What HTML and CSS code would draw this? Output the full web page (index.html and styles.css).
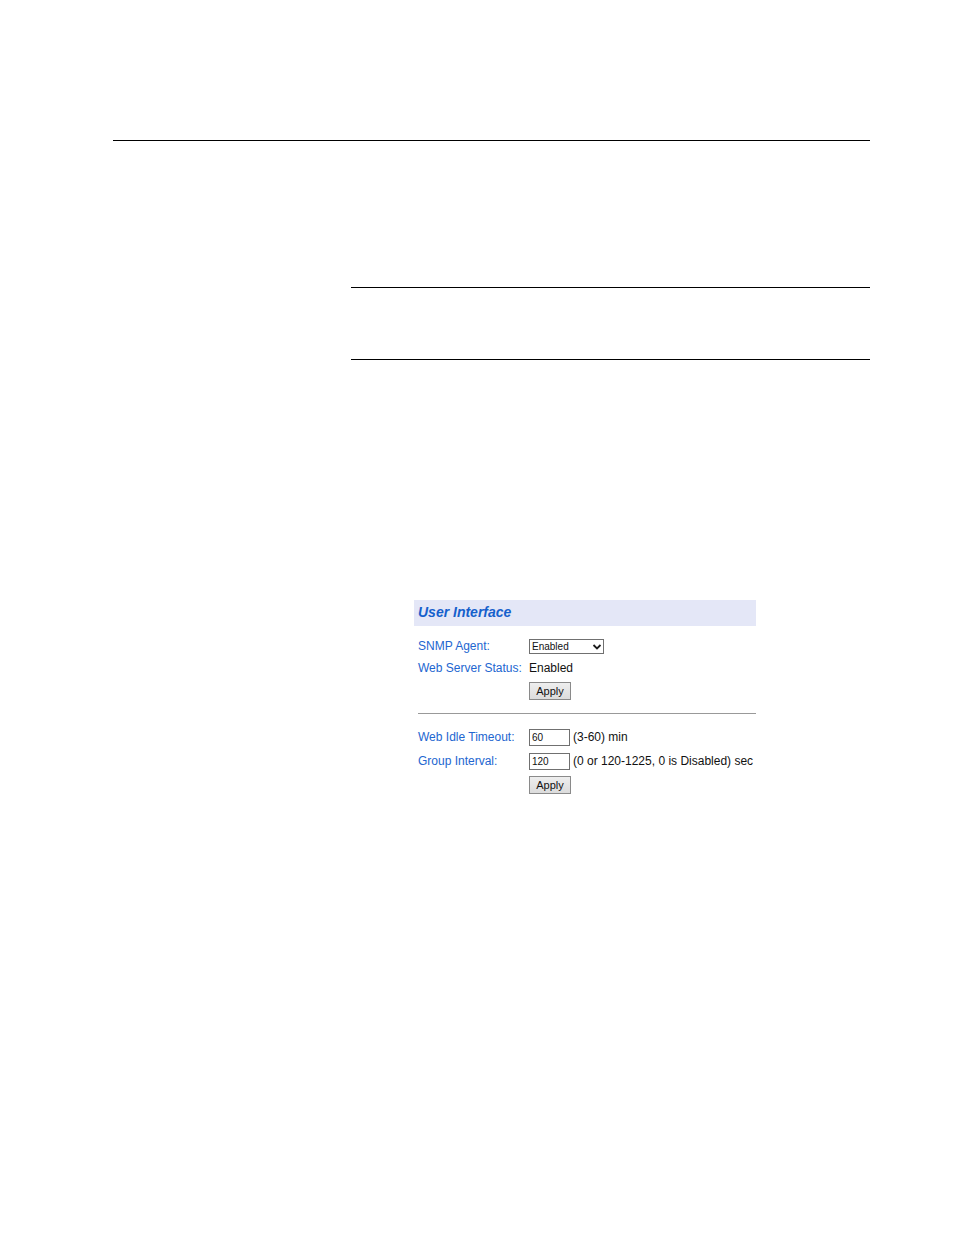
FILE: index.html
```
<!DOCTYPE html>
<html lang="en">
<head>
    <meta charset="UTF-8">
    <meta name="viewport" content="width=device-width, initial-scale=1.0">
    <title>User Interface</title>
    <link rel="stylesheet" href="styles.css">
</head>
<body>
    <div id="page">
        <hr class="rule">
        <div id="content">
            <div id="note"></div>
            <div id="panel">
                <h1>User Interface</h1>
                <form class="settings">
                    <label for="snmp">SNMP Agent:</label>
                    <div class="select-box">
                        <select id="snmp">
                            <option>Enabled</option>
                            <option>Disabled</option>
                        </select>
                        <svg class="arrow" width="10" height="6" viewBox="0 0 10 6">
                            <path d="M1.5 1 L5 4.5 L8.5 1" fill="none" stroke="#1c1c1c" stroke-width="1.8"/>
                        </svg>
                    </div>
                    <span class="name">Web Server Status:</span>
                    <span>Enabled</span>
                    <button type="button">Apply</button>
                </form>
                <hr class="divider">
                <form class="settings">
                    <label for="timeout">Web Idle Timeout:</label>
                    <div class="field">
                        <input type="text" id="timeout" value="60">
                        <span>(3-60) min</span>
                    </div>
                    <label for="interval">Group Interval:</label>
                    <div class="field">
                        <input type="text" id="interval" value="120">
                        <span>(0 or 120-1225, 0 is Disabled) sec</span>
                    </div>
                    <button type="button">Apply</button>
                </form>
            </div>
        </div>
    </div>
</body>
</html>
```

FILE: styles.css
```
body {
    margin: 0;
    background-color: white;
    color: #111;
    font-family: "Liberation Sans", Arial, sans-serif;
    font-size: 12px;
    line-height: 16px;
}
#page {
    padding: 140px 84px 80px 113px;
}
.rule {
    margin: 0;
    border: none;
    border-top: 1px solid black;
}
#content {
    margin-top: 146px;
    margin-left: 238px;
}
/* empty note area between two rules */
#note {
    height: 71px;
    border-top: 1px solid black;
    border-bottom: 1px solid black;
}
#panel {
    margin: 240px 114px 0 63px;
}
h1 {
    margin: 0;
    padding: 0 4px 2px;
    background-color: #e4e7f7;
    color: #1560cc;
    font-size: 14px;
    font-style: italic;
    line-height: 24px;
}
.settings {
    display: grid;
    grid-template-columns: 105px 1fr;
    gap: 6px;
    align-items: center;
    justify-items: start;
    margin: 12px 0 13px 4px;
    white-space: nowrap;
}
label, .name {
    color: #2266d0;
}
.select-box {
    display: flex;
    position: relative;
}
select, input {
    box-sizing: border-box;
    margin: 0;
    border: 1px solid #707070;
    border-radius: 0;
    background-color: white;
    color: #111;
    font-family: inherit;
    font-size: 10px;
}
select {
    appearance: none;
    width: 75px;
    height: 15px;
    padding: 0 2px;
}
.arrow {
    position: absolute;
    right: 2px;
    top: 5px;
    pointer-events: none;
}
.field {
    display: flex;
    align-items: center;
    gap: 3px;
    min-height: 18px;
}
input {
    width: 41px;
    height: 17px;
    padding: 0 2px;
}
button {
    grid-column: 2;
    width: 42px;
    height: 18px;
    padding: 0;
    border: 1px solid #8a8a8a;
    border-radius: 0;
    background: linear-gradient(#eeeeee, #dcdcdc);
    color: #111;
    font-family: inherit;
    font-size: 11px;
    line-height: 16px;
}
.divider {
    margin: 0 0 14px 4px;
    border: none;
    border-top: 1px solid #999;
}
```
